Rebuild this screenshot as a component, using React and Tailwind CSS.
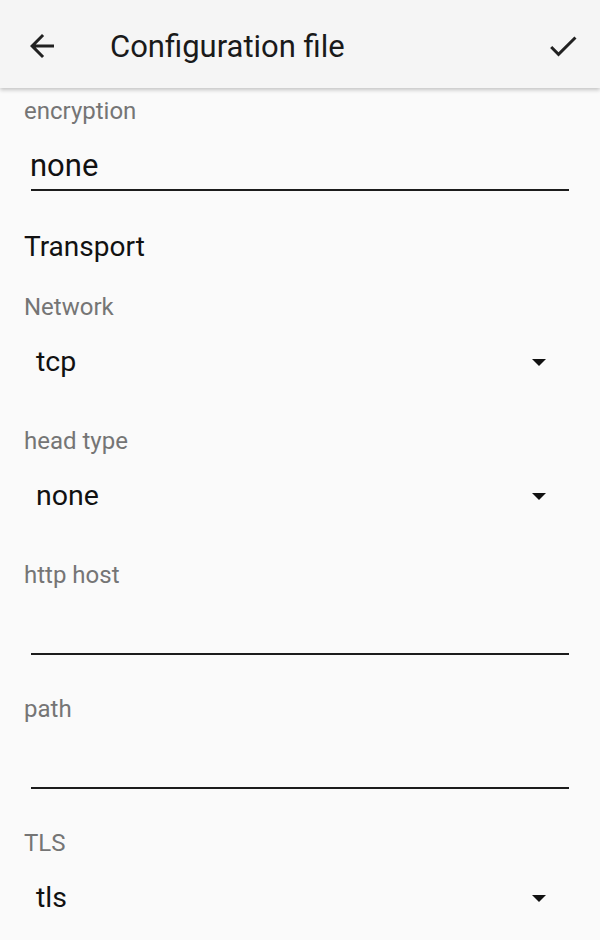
import React from 'react';

const font = { fontFamily: 'Roboto, "Noto Sans", sans-serif' };

function ArrowBack() {
  return (
    <svg width="36" height="36" viewBox="0 0 24 24" className="shrink-0">
      <path d="M20 11H7.83l5.59-5.59L12 4l-8 8 8 8 1.41-1.41L7.83 13H20v-2z" fill="#212121" />
    </svg>
  );
}

function Check() {
  return (
    <svg width="36" height="36" viewBox="0 0 24 24" className="shrink-0">
      <path d="M9 16.17L4.83 12l-1.42 1.41L9 19 21 7l-1.41-1.41z" fill="#212121" />
    </svg>
  );
}

function DropArrow() {
  return (
    <svg width="14" height="7" viewBox="0 0 14 7" className="shrink-0">
      <path d="M0 0h14L7 7z" fill="#111" />
    </svg>
  );
}

// label + edit text with underline
function TextField({ label, value }) {
  return (
    <div className="h-[134px] flex flex-col">
      <div className="h-[32px] pl-[24px] text-[24px] leading-[32px] text-[#757575]">{label}</div>
      <div className="mt-[19px] h-[40px] pl-[30px] text-[31px] leading-[40px] text-[#111]">{value}</div>
      <div className="mt-[3px] mx-[31px] h-[2px] bg-[#1c1c1c]" />
    </div>
  );
}

// label + spinner
function SelectField({ label, value }) {
  return (
    <div className="h-[134px] flex flex-col">
      <div className="h-[32px] pl-[24px] text-[24px] leading-[32px] text-[#757575]">{label}</div>
      <div className="mt-[19px] h-[40px] pl-[36px] pr-[54px] flex items-center justify-between">
        <span className="text-[28.5px] leading-[40px] text-[#111]">{value}</span>
        <DropArrow />
      </div>
    </div>
  );
}

export default function App() {
  return (
    <div className="w-[600px] h-[940px] overflow-hidden bg-[#fafafa]" style={font}>
      {/* toolbar */}
      <div className="relative z-10 h-[88px] bg-[#f5f5f5] flex items-center pl-[24px] pr-[19px] pt-[4px] shadow-[0_2px_4px_rgba(0,0,0,0.22)]">
        <ArrowBack />
        <h1 className="ml-[50px] flex-1 text-[31px] font-normal text-[#1a1a1a] leading-none">Configuration file</h1>
        <Check />
      </div>

      <div className="pt-[7px]">
        <TextField label="encryption" value="none" />

        <div className="-mt-[2px] h-[40px] pl-[24px] text-[28px] leading-[40px] text-[#111]">Transport</div>

        <div className="mt-[24px]">
          <SelectField label="Network" value="tcp" />
          <SelectField label="head type" value="none" />
          <TextField label="http host" value="" />
          <TextField label="path" value="" />
          <SelectField label="TLS" value="tls" />
        </div>
      </div>
    </div>
  );
}
